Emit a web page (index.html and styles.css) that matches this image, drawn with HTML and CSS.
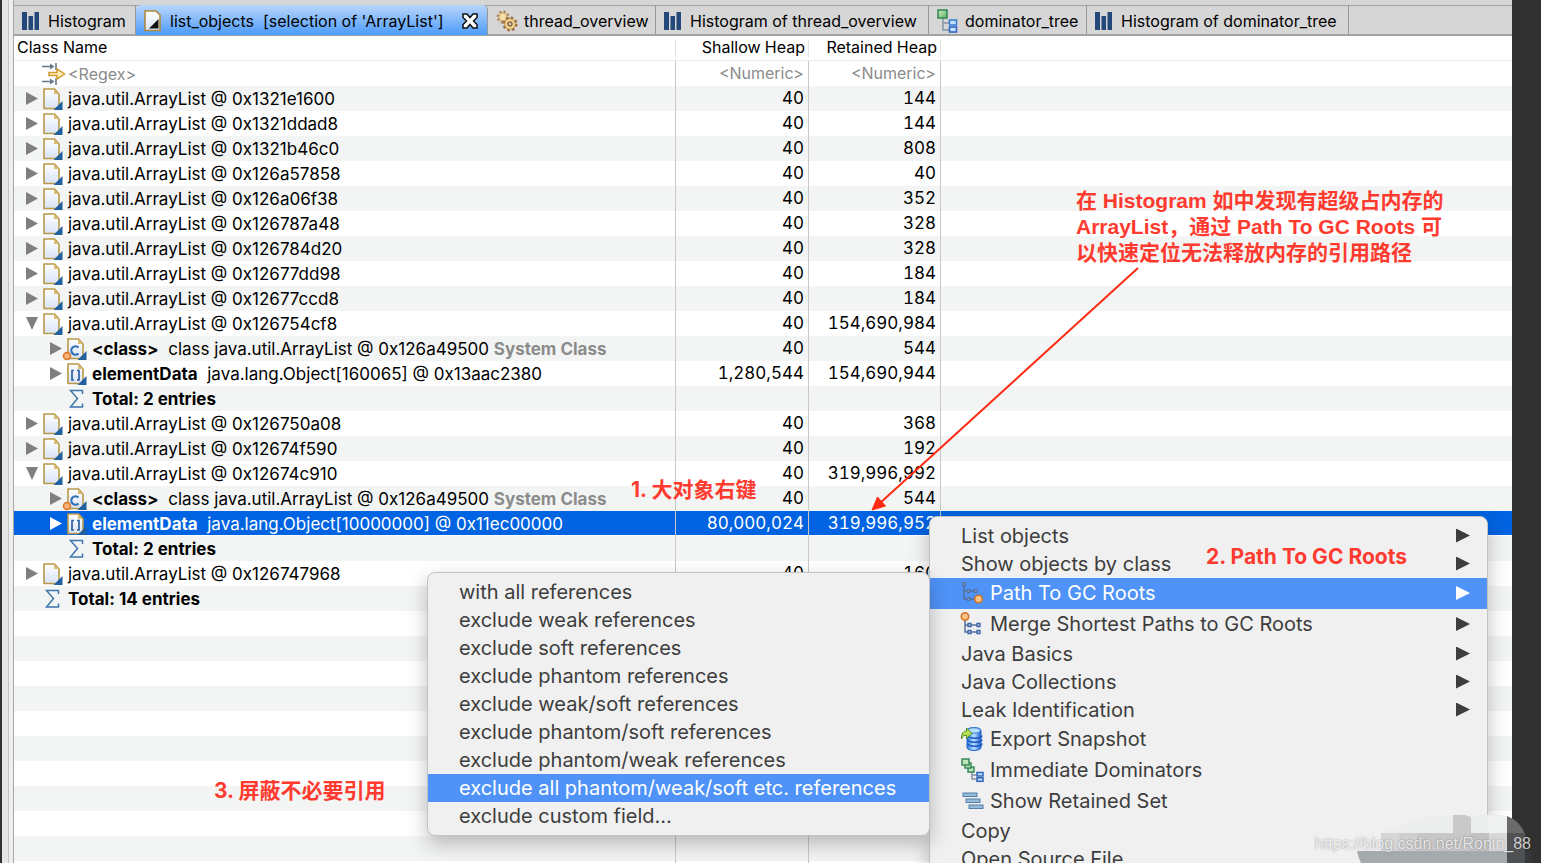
FILE: index.html
```html
<!DOCTYPE html>
<html lang="zh-CN">
<head>
<meta charset="utf-8">
<title>Memory Analyzer - list_objects</title>
<link rel="stylesheet" href="styles.css">
</head>
<body>
<svg class="defs" aria-hidden="true">
  <defs>
    <linearGradient id="paper" x1="0" y1="0" x2="0" y2="1"><stop offset="0" stop-color="#fff"/><stop offset="1" stop-color="#d9e3f6"/></linearGradient>
    <linearGradient id="green" x1="0" y1="0" x2="1" y2="1"><stop offset="0" stop-color="#c9ecc0"/><stop offset="1" stop-color="#5fb262"/></linearGradient>
    <linearGradient id="blue" x1="0" y1="0" x2="1" y2="0"><stop offset="0" stop-color="#2f7fe0"/><stop offset=".5" stop-color="#b9e2ff"/><stop offset="1" stop-color="#1f5fd0"/></linearGradient>
    <symbol id="i-doc" viewBox="0 0 22 22"><path d="M2 1H12.500L17 6V20.500H2Z" fill="url(#paper)" stroke="#b8994a" stroke-width="1.600"/><path d="M12 1V6H17Z" fill="#d9bd72"/><path d="M20.500 13V22H11.500Z" fill="#20609f"/></symbol>
    <symbol id="i-class" viewBox="0 0 22 22"><use href="#i-doc"/><path d="M12.500 9.500A4.200 4.200 0 1 0 12.500 15.500" fill="none" stroke="#2f6fb5" stroke-width="2.200"/></symbol>
    <symbol id="i-array" viewBox="0 0 22 22"><use href="#i-doc"/><path d="M8 7.500H6V17H8M11 7.500H13V17H11" fill="none" stroke="#2c62a0" stroke-width="1.700"/></symbol>
    <symbol id="i-sum" viewBox="0 0 22 22"><path d="M16.500 6V2.500H4.500L11.500 10.500L4.500 19H16.500V15.500" fill="none" stroke="#3f76ad" stroke-width="1.500"/></symbol>
    <symbol id="i-bars" viewBox="0 0 18 18"><path d="M0 0H5V18H0ZM6.500 4H11V18H6.500ZM12.500 0H17V18H12.500Z" fill="#24487a"/></symbol>
    <symbol id="i-tree" viewBox="0 0 22 24"><path d="M6 9V21H12M6 14H12" fill="none" stroke="#8594a8" stroke-width="1.500"/><rect x="1" y="1" width="9" height="8" fill="url(#green)" stroke="#2f8650" stroke-width="1.500"/><rect x="12.500" y="11" width="7" height="5" fill="#bfe3ff" stroke="#3678cf" stroke-width="1.500"/><rect x="12.500" y="18" width="7" height="5" fill="#bfe3ff" stroke="#2c5fc4" stroke-width="1.500"/></symbol>
  </defs>
</svg>
<main class="window">
  <nav class="tabs" role="tablist">
    <button class="tab tab-hist" role="tab"><svg class="bars"><use href="#i-bars"/></svg>Histogram</button>
    <button class="tab tab-active" role="tab" aria-selected="true"><svg class="tab-icon" viewBox="0 0 18 22"><path d="M1 1H12L16 5V20.500H1Z" fill="url(#paper)" stroke="#a98a3c" stroke-width="1.600"/><path d="M14.500 9V18.500H5Z" fill="#111"/></svg><span class="tab-label">list_objects&nbsp; [selection of 'ArrayList']</span><svg class="close" viewBox="0 0 16 16"><path d="M1 1H5L8 4.500L11 1H15V4.500L11.500 8L15 11.500V15H11L8 11.500L5 15H1V11.500L4.500 8L1 4.500Z" fill="#fff" stroke="#111" stroke-width="1.500"/></svg></button>
    <button class="tab tab-thread" role="tab"><svg class="gears" viewBox="0 0 22 22"><circle cx="7" cy="7" r="5" fill="#f3dfae" stroke="#a98063" stroke-width="3" stroke-dasharray="2 1.900"/><circle cx="7" cy="7" r="4" fill="#f3dfae" stroke="#c9a366"/><circle cx="14" cy="14" r="6" fill="#f6dc9c" stroke="#9a6b45" stroke-width="3" stroke-dasharray="2.400 2.300"/><circle cx="14" cy="14" r="5.200" fill="#f6dc9c" stroke="#b98d4a"/><circle cx="14" cy="14" r="2" fill="#d6d6d6" stroke="#8b6238" stroke-width="1.500"/></svg>thread_overview</button>
    <button class="tab tab-hist-thread" role="tab"><svg class="bars"><use href="#i-bars"/></svg>Histogram of thread_overview</button>
    <button class="tab tab-dom" role="tab"><svg class="tree"><use href="#i-tree"/></svg>dominator_tree</button>
    <button class="tab tab-hist-dom" role="tab"><svg class="bars"><use href="#i-bars"/></svg>Histogram of dominator_tree</button>
  </nav>
  <table class="objects">
    <colgroup><col class="col-name"><col class="col-shallow"><col class="col-retained"><col></colgroup>
    <thead><tr><th>Class Name</th><th class="num">Shallow Heap</th><th class="num">Retained Heap</th><th></th></tr></thead>
    <tbody>
      <tr><td><label class="node"><svg class="filter" viewBox="0 0 24 22"><path d="M0 3.500H10M0 18.500H10M14 0V7M14 15V22" stroke="#66788c" stroke-width="1.600"/><path d="M8 .500L12.500 3.500L8 6.500ZM8 15.500L12.500 18.500L8 21.500Z" fill="#66788c"/><path d="M7 9.500H15V6L22.500 11L15 16V12.500H7Z" fill="#fff0b8" stroke="#d39a36" stroke-width="1.500"/></svg><input class="field" type="text" placeholder="&lt;Regex&gt;" aria-label="Class name filter"></label></td><td class="num"><input class="field num" type="text" placeholder="&lt;Numeric&gt;" aria-label="Shallow heap filter"></td><td class="num"><input class="field num" type="text" placeholder="&lt;Numeric&gt;" aria-label="Retained heap filter"></td><td></td></tr>
      <tr><td><div class="node"><button class="twisty" aria-label="Expand"></button><svg class="icon"><use href="#i-doc"/></svg><span>java.util.ArrayList @ 0x1321e1600</span></div></td><td class="num">40</td><td class="num">144</td><td></td></tr>
      <tr><td><div class="node"><button class="twisty" aria-label="Expand"></button><svg class="icon"><use href="#i-doc"/></svg><span>java.util.ArrayList @ 0x1321ddad8</span></div></td><td class="num">40</td><td class="num">144</td><td></td></tr>
      <tr><td><div class="node"><button class="twisty" aria-label="Expand"></button><svg class="icon"><use href="#i-doc"/></svg><span>java.util.ArrayList @ 0x1321b46c0</span></div></td><td class="num">40</td><td class="num">808</td><td></td></tr>
      <tr><td><div class="node"><button class="twisty" aria-label="Expand"></button><svg class="icon"><use href="#i-doc"/></svg><span>java.util.ArrayList @ 0x126a57858</span></div></td><td class="num">40</td><td class="num">40</td><td></td></tr>
      <tr><td><div class="node"><button class="twisty" aria-label="Expand"></button><svg class="icon"><use href="#i-doc"/></svg><span>java.util.ArrayList @ 0x126a06f38</span></div></td><td class="num">40</td><td class="num">352</td><td></td></tr>
      <tr><td><div class="node"><button class="twisty" aria-label="Expand"></button><svg class="icon"><use href="#i-doc"/></svg><span>java.util.ArrayList @ 0x126787a48</span></div></td><td class="num">40</td><td class="num">328</td><td></td></tr>
      <tr><td><div class="node"><button class="twisty" aria-label="Expand"></button><svg class="icon"><use href="#i-doc"/></svg><span>java.util.ArrayList @ 0x126784d20</span></div></td><td class="num">40</td><td class="num">328</td><td></td></tr>
      <tr><td><div class="node"><button class="twisty" aria-label="Expand"></button><svg class="icon"><use href="#i-doc"/></svg><span>java.util.ArrayList @ 0x12677dd98</span></div></td><td class="num">40</td><td class="num">184</td><td></td></tr>
      <tr><td><div class="node"><button class="twisty" aria-label="Expand"></button><svg class="icon"><use href="#i-doc"/></svg><span>java.util.ArrayList @ 0x12677ccd8</span></div></td><td class="num">40</td><td class="num">184</td><td></td></tr>
      <tr><td><div class="node"><button class="twisty open" aria-label="Collapse"></button><svg class="icon"><use href="#i-doc"/></svg><span>java.util.ArrayList @ 0x126754cf8</span></div></td><td class="num">40</td><td class="num">154,690,984</td><td></td></tr>
      <tr><td><div class="node child"><button class="twisty" aria-label="Expand"></button><svg class="icon"><use href="#i-class"/><circle cx="1" cy="18" r="3.500" fill="#fbb377" stroke="#d9742a" stroke-width="1.500"/></svg><span><b>&lt;class&gt;</b>&nbsp; class java.util.ArrayList @ 0x126a49500 <b class="sys">System Class</b></span></div></td><td class="num">40</td><td class="num">544</td><td></td></tr>
      <tr><td><div class="node child"><button class="twisty" aria-label="Expand"></button><svg class="icon"><use href="#i-array"/></svg><span><b>elementData</b>&nbsp; java.lang.Object[160065] @ 0x13aac2380</span></div></td><td class="num">1,280,544</td><td class="num">154,690,944</td><td></td></tr>
      <tr><td><div class="node child"><i class="twisty-space"></i><svg class="icon"><use href="#i-sum"/></svg><b>Total: 2 entries</b></div></td><td></td><td></td><td></td></tr>
      <tr><td><div class="node"><button class="twisty" aria-label="Expand"></button><svg class="icon"><use href="#i-doc"/></svg><span>java.util.ArrayList @ 0x126750a08</span></div></td><td class="num">40</td><td class="num">368</td><td></td></tr>
      <tr><td><div class="node"><button class="twisty" aria-label="Expand"></button><svg class="icon"><use href="#i-doc"/></svg><span>java.util.ArrayList @ 0x12674f590</span></div></td><td class="num">40</td><td class="num">192</td><td></td></tr>
      <tr><td><div class="node"><button class="twisty open" aria-label="Collapse"></button><svg class="icon"><use href="#i-doc"/></svg><span>java.util.ArrayList @ 0x12674c910</span></div></td><td class="num">40</td><td class="num">319,996,992</td><td></td></tr>
      <tr><td><div class="node child"><button class="twisty" aria-label="Expand"></button><svg class="icon"><use href="#i-class"/><circle cx="1" cy="18" r="3.500" fill="#fbb377" stroke="#d9742a" stroke-width="1.500"/></svg><span><b>&lt;class&gt;</b>&nbsp; class java.util.ArrayList @ 0x126a49500 <b class="sys">System Class</b></span></div></td><td class="num">40</td><td class="num">544</td><td></td></tr>
      <tr class="selected"><td><div class="node child"><button class="twisty" aria-label="Expand"></button><svg class="icon"><use href="#i-array"/></svg><span><b>elementData</b>&nbsp; java.lang.Object[10000000] @ 0x11ec00000</span></div></td><td class="num">80,000,024</td><td class="num">319,996,952</td><td></td></tr>
      <tr><td><div class="node child"><i class="twisty-space"></i><svg class="icon"><use href="#i-sum"/></svg><b>Total: 2 entries</b></div></td><td></td><td></td><td></td></tr>
      <tr><td><div class="node"><button class="twisty" aria-label="Expand"></button><svg class="icon"><use href="#i-doc"/></svg><span>java.util.ArrayList @ 0x126747968</span></div></td><td class="num">40</td><td class="num">160</td><td></td></tr>
      <tr><td><div class="node"><i class="twisty-space"></i><svg class="icon"><use href="#i-sum"/></svg><b>Total: 14 entries</b></div></td><td></td><td></td><td></td></tr>
      <tr><td></td><td></td><td></td><td></td></tr>
      <tr><td></td><td></td><td></td><td></td></tr>
      <tr><td></td><td></td><td></td><td></td></tr>
      <tr><td></td><td></td><td></td><td></td></tr>
      <tr><td></td><td></td><td></td><td></td></tr>
      <tr><td></td><td></td><td></td><td></td></tr>
      <tr><td></td><td></td><td></td><td></td></tr>
      <tr><td></td><td></td><td></td><td></td></tr>
      <tr><td></td><td></td><td></td><td></td></tr>
      <tr><td></td><td></td><td></td><td></td></tr>
      <tr><td></td><td></td><td></td><td></td></tr>
    </tbody>
  </table>
</main>

<div class="menu context-menu" role="menu">
  <button class="item more" role="menuitem">List objects</button>
  <button class="item more" role="menuitem">Show objects by class</button>
  <button class="item tall more current" role="menuitem"><svg class="menu-icon" viewBox="0 0 24 24"><path d="M3 4V18H16M3 10H14" fill="none" stroke="#54719f" stroke-width="1.500"/><path d="M1.500 1.500H4.500V4.500H1.500ZM6 8.500H9V11.500H6ZM13 8.500H16V11.500H13ZM6 16.500H9V19.500H6Z" fill="#6f8fc0" stroke="#54719f"/><circle cx="17.500" cy="18" r="3.800" fill="#fcc183" stroke="#cf7528" stroke-width="1.600"/></svg>Path To GC Roots</button>
  <button class="item tall more" role="menuitem"><svg class="menu-icon" viewBox="0 0 24 24"><path d="M4 7V20H18M4 13H18" fill="none" stroke="#54719f" stroke-width="1.500"/><path d="M7 11.500H10V14.500H7ZM16 11.500H19V14.500H16ZM7 18.500H10V21.500H7ZM16 18.500H19V21.500H16Z" fill="#b6d0ee" stroke="#3f65a5" stroke-width="1.300"/><circle cx="4" cy="4.500" r="3.700" fill="#fcc183" stroke="#cf7528" stroke-width="1.600"/></svg>Merge Shortest Paths to GC Roots</button>
  <button class="item more" role="menuitem">Java Basics</button>
  <button class="item more" role="menuitem">Java Collections</button>
  <button class="item more" role="menuitem">Leak Identification</button>
  <button class="item tall" role="menuitem"><svg class="menu-icon" viewBox="0 0 24 24"><path d="M6 3.500V20.500C6 24.500 20 24.500 20 20.500V3.500C20-.500 6-.500 6 3.500Z" fill="url(#blue)" stroke="#2361cb"/><ellipse cx="13" cy="3.500" rx="6.500" ry="2.700" fill="#b6dcfa" stroke="#3a82d4"/><path d="M6 8.500C6 12 20 12 20 8.500M6 12.500C6 16 20 16 20 12.500M6 16.500C6 20 20 20 20 16.500" transform="translate(1 0)" fill="none" stroke="#1b56bd" stroke-width="1.500"/><path d="M.500 12C0 6 3 4 5.500 4V1L11 6.500L5.500 11.500V8.500C3.500 8 1.500 9 .500 12Z" fill="#b6dd4e" stroke="#4f8b2a"/></svg>Export Snapshot</button>
  <button class="item tall" role="menuitem"><svg class="menu-icon" viewBox="0 0 24 24"><path d="M11 14V21H16M11 17H16" fill="none" stroke="#8290a5" stroke-width="1.500"/><g fill="#bde5ba" stroke="#38875a" stroke-width="1.500"><rect x="7" y="9" width="6" height="5"/><rect x="4" y="5" width="6" height="5"/><rect x="1" y="1" width="7" height="6"/></g><g fill="#bde2ff" stroke="#3265b8" stroke-width="1.500"><rect x="16" y="14.500" width="6" height="3.500"/><rect x="16" y="19.800" width="6" height="3.500"/></g></svg>Immediate Dominators</button>
  <button class="item tall" role="menuitem"><svg class="menu-icon" viewBox="0 0 24 24"><g fill="#94bddc" stroke="#557fa6"><rect x="2" y="4" width="14" height="3.500"/><rect x="5" y="10" width="14" height="3.500"/><rect x="8" y="16" width="14" height="3.500"/></g></svg>Show Retained Set</button>
  <button class="item" role="menuitem">Copy</button>
  <button class="item" role="menuitem">Open Source File</button>
</div>

<div class="menu sub-menu" role="menu">
  <button class="item" role="menuitem">with all references</button>
  <button class="item" role="menuitem">exclude weak references</button>
  <button class="item" role="menuitem">exclude soft references</button>
  <button class="item" role="menuitem">exclude phantom references</button>
  <button class="item" role="menuitem">exclude weak/soft references</button>
  <button class="item" role="menuitem">exclude phantom/soft references</button>
  <button class="item" role="menuitem">exclude phantom/weak references</button>
  <button class="item current" role="menuitem">exclude all phantom/weak/soft etc. references</button>
  <button class="item" role="menuitem">exclude custom field...</button>
</div>

<svg class="arrow" viewBox="0 0 270 246" aria-hidden="true"><path d="M267 1L8 237" stroke="#ff2a12" stroke-width="2"/><path d="M1 243L6.500 230L14.500 239Z" fill="#ff2a12" stroke="#ff2a12"/></svg>
<p class="note note-top">在 Histogram 如中发现有超级占内存的<br>ArrayList，通过 Path To GC Roots 可<br>以快速定位无法释放内存的引用路径</p>
<p class="note note-one">1. 大对象右键</p>
<p class="note note-two">2. Path To GC Roots</p>
<p class="note note-three">3. 屏蔽不必要引用</p>

<svg class="badge" viewBox="0 0 184 48" aria-hidden="true">
  <path d="M114 0H147V18H24Q60 0 96 0Z" fill="#eceeed"/>
  <path d="M130 2Q140 0 150 1V18H130Z" fill="#eff0f0"/>
  <path d="M150 1Q164 6 168 20H150Z" fill="#6b6b6b"/>
  <path d="M24 18H42V36H24Z" fill="#d6d6d6"/><path d="M42 18H60V36H42Z" fill="#cfcfcf"/><path d="M60 18H114V36H60Z" fill="#c7c7c7"/>
  <path d="M96 0H108L114 2V18H96Z" fill="#c9c9c9"/><path d="M114 18H132V36H114Z" fill="#c2c2c2"/><path d="M132 18H150V36H132Z" fill="#d8d8d8"/>
  <path d="M150 18H168V36H150Z" fill="#535353"/>
  <path d="M0 36H150V48H4Q1 42 0 36Z" fill="#a5abad"/><path d="M150 36H168V48H150Z" fill="#4d5153"/><path d="M168 36H175V48H168Z" fill="#34383a"/>
</svg>
<p class="watermark">https://blog.csdn.net/Ronin_88</p>
</body>
</html>
```
FILE: styles.css
```css
* { box-sizing: border-box; }

html, body { height: 100%; }

body {
  margin: 0;
  position: relative;
  display: flex;
  overflow: hidden;
  background: #313131;
  font-family: Inter, "Noto Sans CJK SC", sans-serif;
  font-size: 16px;
  line-height: 24px;
  color: #000;
}

button {
  margin: 0;
  padding: 0;
  border: 0;
  background: none;
  font: inherit;
  color: inherit;
  text-align: left;
}

svg { flex: none; overflow: visible; }

.defs { position: absolute; width: 0; height: 0; }

/* Editor window */
.window {
  flex: 1;
  min-width: 0;
  margin: 0 29px 0 2px;
  border-left: 6px solid #e6e6e6;
  box-shadow: inset 1px 0 #c4c4c4, inset 5px 0 #efefef, inset 6px 0 #a6a6a6;
  padding-left: 6px;
  background: #fff;
  overflow: hidden;
}

.tabs {
  display: flex;
  height: 36px;
  padding-top: 5px;
  background: #d6d6d6;
  border-bottom: 2px solid #a3a3a3;
  box-shadow: inset 0 5px #d6d6d6, inset 0 6px #a3a3a3;
}

.tab {
  display: flex;
  align-items: center;
  padding: 2px 0 0 8px;
  border-right: 1px solid #989898;
  white-space: nowrap;
}

.tab-hist { width: 122px; }
.tab-active {
  width: 352px;
  border-radius: 5px 5px 0 0;
  background: linear-gradient(#b9d6fa, #4c9bfb);
  margin-bottom: -1px;
}
.tab-thread { width: 168px; }
.tab-hist-thread { width: 273px; }
.tab-dom { width: 158px; }
.tab-hist-dom { width: 262px; }

.bars { width: 18px; height: 18px; margin: 0 8px 0 0; }
.tab-icon { width: 18px; height: 22px; margin-right: 8px; }
.gears { width: 22px; height: 22px; margin-right: 6px; }
.tree { width: 22px; height: 24px; margin-right: 6px; }
.close { width: 16px; height: 16px; margin-left: auto; margin-right: 9px; }

/* Object table */
.objects {
  width: 100%;
  table-layout: fixed;
  border-collapse: separate;
  border-spacing: 0;
}

.col-name { width: 662px; }
.col-shallow { width: 133px; }
.col-retained { width: 132px; }

th {
  height: 25px;
  padding: 0 3px 2px;
  border-bottom: 1px solid #ececec;
  background: linear-gradient(#e2e2e2, #e2e2e2) right 4px / 1px 17px no-repeat;
  font-weight: 400;
  line-height: 22px;
  text-align: left;
  white-space: nowrap;
}

th:last-child { background: none; }

td {
  height: 25px;
  padding: 0;
  border-right: 1px solid #c8c8c8;
  font-size: 17px;
  white-space: nowrap;
}

td:last-child { border-right: 0; }

tbody tr:nth-child(even) { background: #f3f5f4; }

.num {
  padding-right: 4px;
  text-align: right;
  font-variant-numeric: tabular-nums;
}

td.num { line-height: 22px; padding-bottom: 2px; }

.node {
  display: flex;
  align-items: center;
  height: 25px;
  padding-left: 10px;
}

.child { padding-left: 34px; }

.twisty, .twisty-space { flex: none; width: 16px; height: 16px; margin-right: 2px; }

.twisty::before {
  content: "";
  display: block;
  width: 12px;
  height: 13px;
  margin-left: 2px;
  background: #7f7f7f;
  clip-path: polygon(0 0, 100% 50%, 0 100%);
}

.twisty.open::before { clip-path: polygon(0 0, 100% 0, 50% 100%); }

.icon { width: 22px; height: 22px; margin-right: 4px; }
.filter { width: 24px; height: 22px; margin: 0 2px 0 18px; }
.sys { color: #8b8b8b; }

.field {
  display: block;
  width: 100%;
  height: 22px;
  padding: 0;
  border: 0;
  background: none;
  font: inherit;
  font-size: 16px;
}

.field::placeholder { color: #8b8b8b; opacity: 1; }

tbody .selected {
  background: linear-gradient(#0063e1, #0063e1) 0 0 / 100% 24px no-repeat;
  color: #fff;
}

.selected .twisty::before { background: #fff; }

/* Menus */
.menu {
  position: absolute;
  display: flex;
  flex-direction: column;
  padding: 5px 0;
  border: 1px solid #c3c3c3;
  border-radius: 8px;
  background: #f0f0f0;
  box-shadow: 0 8px 20px rgba(0, 0, 0, .25);
  color: #3d3d3d;
  font-size: 20px;
}

.context-menu { left: 929px; top: 516px; width: 559px; }
.sub-menu { left: 427px; top: 572px; width: 503px; }

.item {
  display: flex;
  align-items: center;
  height: 28px;
  padding: 0 17px 1px 31px;
  white-space: nowrap;
}

.tall { height: 31px; }

.current { background: #4f93f8; color: #fff; }

.more::after {
  content: "";
  width: 14px;
  height: 14px;
  margin-left: auto;
  background: currentColor;
  clip-path: polygon(0 0, 100% 50%, 0 100%);
}

.menu-icon { width: 24px; height: 24px; margin-right: 5px; }

/* Annotations */
.note {
  position: absolute;
  margin: 0;
  color: #ff3b30;
  font-size: 21px;
  font-weight: 700;
  line-height: 26px;
  white-space: nowrap;
}

.note-top { left: 1076px; top: 188px; font-family: "Liberation Sans", "Noto Sans CJK SC", sans-serif; }
.note-one { left: 631px; top: 477px; }
.note-two { left: 1206px; top: 544px; }
.note-three { left: 214px; top: 778px; }

.arrow { position: absolute; left: 871px; top: 267px; width: 270px; height: 246px; }

.badge { position: absolute; right: 0; bottom: 0; width: 184px; height: 48px; }

.watermark {
  position: absolute;
  right: 10px;
  bottom: 7px;
  margin: 0;
  color: rgba(255, 255, 255, .75);
  font-family: "Liberation Sans", sans-serif;
  font-size: 16px;
  text-shadow: 0 0 2px rgba(0, 0, 0, .4);
}
```
